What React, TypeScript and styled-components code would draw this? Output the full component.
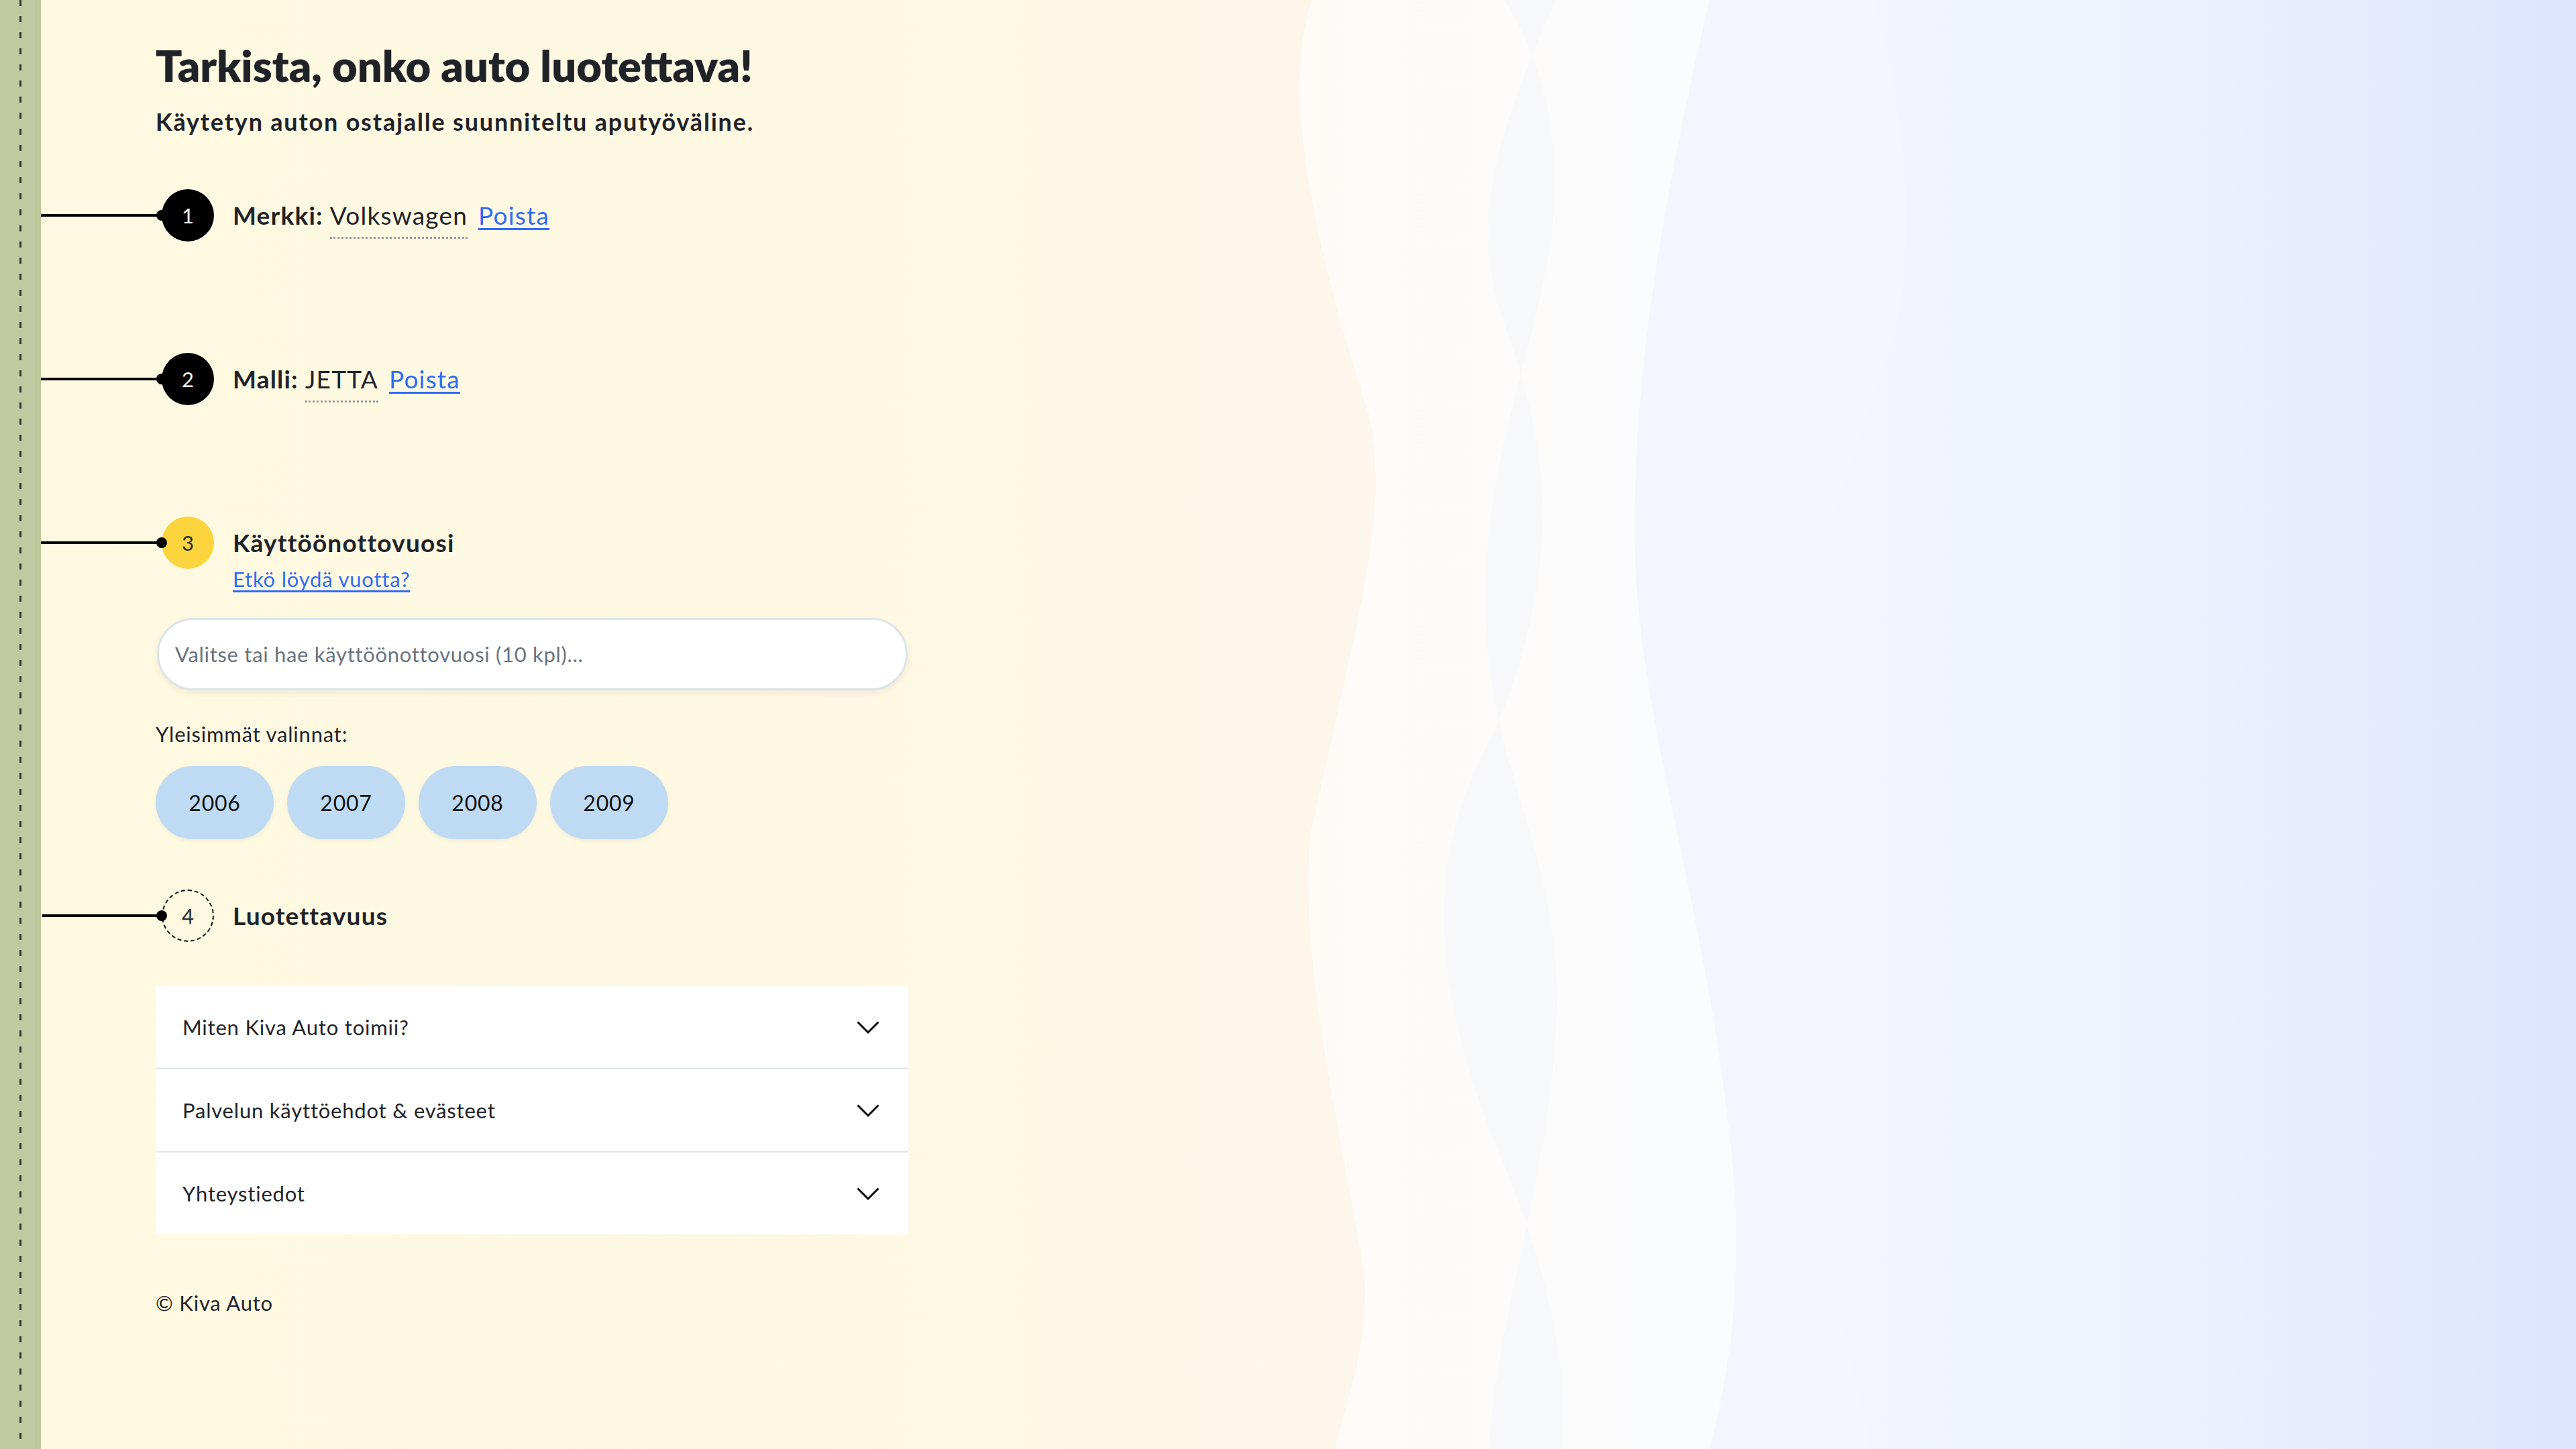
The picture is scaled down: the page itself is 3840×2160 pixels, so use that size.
import React from "react";
import styled, { createGlobalStyle } from "styled-components";

const GlobalStyle = createGlobalStyle`
  html, body {
    margin: 0;
    padding: 0;
  }
  body {
    font-family: Lato, "Noto Sans", sans-serif;
    color: #1f2328;
  }
  * {
    box-sizing: border-box;
  }
`;

const Page = styled.div`
  position: relative;
  display: flex;
  min-height: 2160px;
  overflow: hidden;
  background: linear-gradient(
    90deg,
    #fef9e0 0%,
    #fef8e4 38%,
    #fef6ea 50%,
    #f5f7fd 66%,
    #eef3fe 82%,
    #dce5fd 100%
  );
`;

const Waves = styled.svg`
  position: absolute;
  inset: 0;
  width: 100%;
  height: 100%;
  z-index: 0;
  pointer-events: none;
`;

const Rail = styled.div`
  position: relative;
  z-index: 1;
  flex: 0 0 61px;
  display: flex;
  justify-content: center;
  background: #c0c99f;
  box-shadow: inset -9px 0 0 #bcc699;
`;

const DashLine = styled.div`
  width: 3px;
  margin-right: 1px;
  background: repeating-linear-gradient(
    to bottom,
    #2e3a2b 0 9px,
    transparent 9px 24px
  );
`;

const Main = styled.main`
  position: relative;
  z-index: 1;
  width: 1293px;
  padding: 58px 0 120px 171px;
`;

const Title = styled.h1`
  margin: 0;
  font-size: 65px;
  line-height: 78px;
  font-weight: 800;
  color: #1f2328;
`;

const Subtitle = styled.p`
  margin: 24px 0 0;
  font-size: 36px;
  line-height: 42px;
  font-weight: 700;
  letter-spacing: 1.8px;
  color: #1f2328;
`;

const Step = styled.section<{ $gap: number }>`
  margin-top: ${(p) => p.$gap}px;
`;

const StepHeader = styled.div`
  display: flex;
  align-items: flex-start;
  gap: 28px;
  padding-left: 9px;
`;

const StepCircle = styled.div<{ $state: "done" | "active" | "todo" }>`
  position: relative;
  flex: 0 0 78px;
  height: 78px;
  border-radius: 50%;
  display: flex;
  align-items: center;
  justify-content: center;
  font-size: 31px;
  background: ${(p) =>
    p.$state === "done" ? "#000" : p.$state === "active" ? "#fcd43d" : "transparent"};
  color: ${(p) => (p.$state === "done" ? "#fff" : "#2b2b2b")};
  border: ${(p) => (p.$state === "todo" ? "2.5px dashed #111" : "none")};

  &::before {
    content: "";
    position: absolute;
    right: 100%;
    top: 50%;
    width: 180px;
    height: 4px;
    margin-top: -2px;
    background: #000;
  }
  &::after {
    content: "";
    position: absolute;
    left: ${(p) => (p.$state === "todo" ? "-10.5px" : "-8px")};
    top: 50%;
    width: 16px;
    height: 16px;
    margin-top: -8px;
    border-radius: 50%;
    background: #000;
  }
`;

const StepBody = styled.div`
  display: flex;
  flex-direction: column;
`;

const StepLine = styled.div`
  font-size: 37px;
  line-height: 78px;
  letter-spacing: 1.2px;
  white-space: nowrap;
`;

const Strong = styled.strong`
  font-weight: 700;
`;

const Value = styled.span`
  margin-left: 10px;
  padding-bottom: 10px;
  border-bottom: 3px dotted #9a9a9a;
`;

const Link = styled.a`
  color: #2f6cf5;
  text-decoration: underline;
  text-underline-offset: 5px;
  text-decoration-thickness: 3px;
  cursor: pointer;
`;

const RemoveLink = styled(Link)`
  margin-left: 16px;
`;

const HintLink = styled(Link)`
  font-size: 31px;
  line-height: 30px;
  letter-spacing: 0.8px;
`;

const SearchInput = styled.input`
  display: block;
  width: 1119px;
  height: 108px;
  margin: 43px 0 0 2px;
  padding: 0 24px;
  border: 3px solid #dce5e9;
  border-radius: 54px;
  background: #fff;
  box-shadow: 0 4px 8px rgba(60, 60, 40, 0.08);
  font-family: inherit;
  font-size: 31px;
  letter-spacing: 0.7px;
  color: #1f2328;
  outline: none;
  &::placeholder {
    color: #68737d;
  }
`;

const ChoicesLabel = styled.div`
  margin-top: 47px;
  font-size: 31px;
  line-height: 37px;
  letter-spacing: 0.8px;
`;

const Chips = styled.div`
  display: flex;
  gap: 20px;
  margin-top: 29px;
`;

const Chip = styled.button`
  width: 176px;
  height: 109px;
  border: none;
  border-radius: 55px;
  background: #bfdbf4;
  box-shadow: 0 2px 5px rgba(80, 80, 60, 0.08);
  font-family: inherit;
  font-size: 32px;
  letter-spacing: 0.8px;
  color: #111;
  cursor: pointer;
`;

const Accordion = styled.div`
  margin-top: 66px;
  width: 1122px;
  background: #fff;
`;

const AccordionRow = styled.div`
  display: flex;
  align-items: center;
  justify-content: space-between;
  height: 122px;
  padding: 0 43px 0 40px;
  font-size: 31px;
  letter-spacing: 0.8px;
  color: #1f2328;
  & + & {
    border-top: 2px solid #e1e6ec;
    height: 124px;
  }
`;

const Footer = styled.footer`
  margin-top: 84px;
  font-size: 31px;
  line-height: 37px;
  letter-spacing: 0.8px;
`;

const Chevron = () => (
  <svg width="34" height="19" viewBox="0 0 34 19" fill="none">
    <polyline points="1.5,1.5 17,17 32.5,1.5" stroke="#111" strokeWidth="3" />
  </svg>
);

const years = ["2006", "2007", "2008", "2009"];
const faq = ["Miten Kiva Auto toimii?", "Palvelun käyttöehdot & evästeet", "Yhteystiedot"];

const App: React.FC = () => {
  return (
    <>
      <GlobalStyle />
      <Page>
        <Waves viewBox="0 0 3840 2160" preserveAspectRatio="none">
          <path
            d="M1956 0 C1915 120 1940 300 2041 620 C2070 760 2030 900 1954 1240 C1935 1420 1990 1640 2034 1900 C2040 2000 2010 2080 1990 2160 L2789 2160 C2700 1800 2650 1500 2659 1200 C2665 900 2760 700 2828 482 C2860 300 2830 150 2795 0 Z"
            fill="#ffffff"
            opacity="0.6"
          />
          <path
            d="M2320 0 C2230 200 2190 330 2242 482 C2300 640 2340 820 2229 1089 C2130 1260 2120 1450 2242 1736 C2310 1900 2340 2050 2327 2160 L2220 2160 C2230 1950 2330 1700 2320 1450 C2310 1240 2200 1100 2216 854 C2225 600 2340 420 2314 207 C2305 120 2270 40 2242 0 Z"
            fill="#f0f2fc"
            opacity="0.3"
          />
          <path
            d="M2548 0 C2490 250 2430 550 2437 827 C2445 1100 2560 1400 2587 1791 C2595 1950 2570 2080 2548 2160 L2789 2160 C2700 1800 2650 1500 2659 1200 C2665 900 2760 700 2828 482 C2860 300 2830 150 2795 0 Z"
            fill="#e6edfd"
            opacity="0.35"
          />
        </Waves>
        <Rail>
          <DashLine />
        </Rail>
        <Main>
          <Title>Tarkista, onko auto luotettava!</Title>
          <Subtitle>Käytetyn auton ostajalle suunniteltu aputyöväline.</Subtitle>

          <Step $gap={80}>
            <StepHeader>
              <StepCircle $state="done">1</StepCircle>
              <StepLine>
                <Strong>Merkki:</Strong>
                <Value>Volkswagen</Value>
                <RemoveLink>Poista</RemoveLink>
              </StepLine>
            </StepHeader>
          </Step>

          <Step $gap={166}>
            <StepHeader>
              <StepCircle $state="done">2</StepCircle>
              <StepLine>
                <Strong>Malli:</Strong>
                <Value>JETTA</Value>
                <RemoveLink>Poista</RemoveLink>
              </StepLine>
            </StepHeader>
          </Step>

          <Step $gap={166}>
            <StepHeader>
              <StepCircle $state="active">3</StepCircle>
              <StepBody>
                <StepLine>
                  <Strong>Käyttöönottovuosi</Strong>
                </StepLine>
                <HintLink>Etkö löydä vuotta?</HintLink>
              </StepBody>
            </StepHeader>
            <SearchInput placeholder="Valitse tai hae käyttöönottovuosi (10 kpl)..." />
            <ChoicesLabel>Yleisimmät valinnat:</ChoicesLabel>
            <Chips>
              {years.map((y) => (
                <Chip key={y}>{y}</Chip>
              ))}
            </Chips>
          </Step>

          <Step $gap={75}>
            <StepHeader>
              <StepCircle $state="todo">4</StepCircle>
              <StepLine>
                <Strong>Luotettavuus</Strong>
              </StepLine>
            </StepHeader>
          </Step>

          <Accordion>
            {faq.map((t) => (
              <AccordionRow key={t}>
                <span>{t}</span>
                <Chevron />
              </AccordionRow>
            ))}
          </Accordion>

          <Footer>© Kiva Auto</Footer>
        </Main>
      </Page>
    </>
  );
};

export default App;
